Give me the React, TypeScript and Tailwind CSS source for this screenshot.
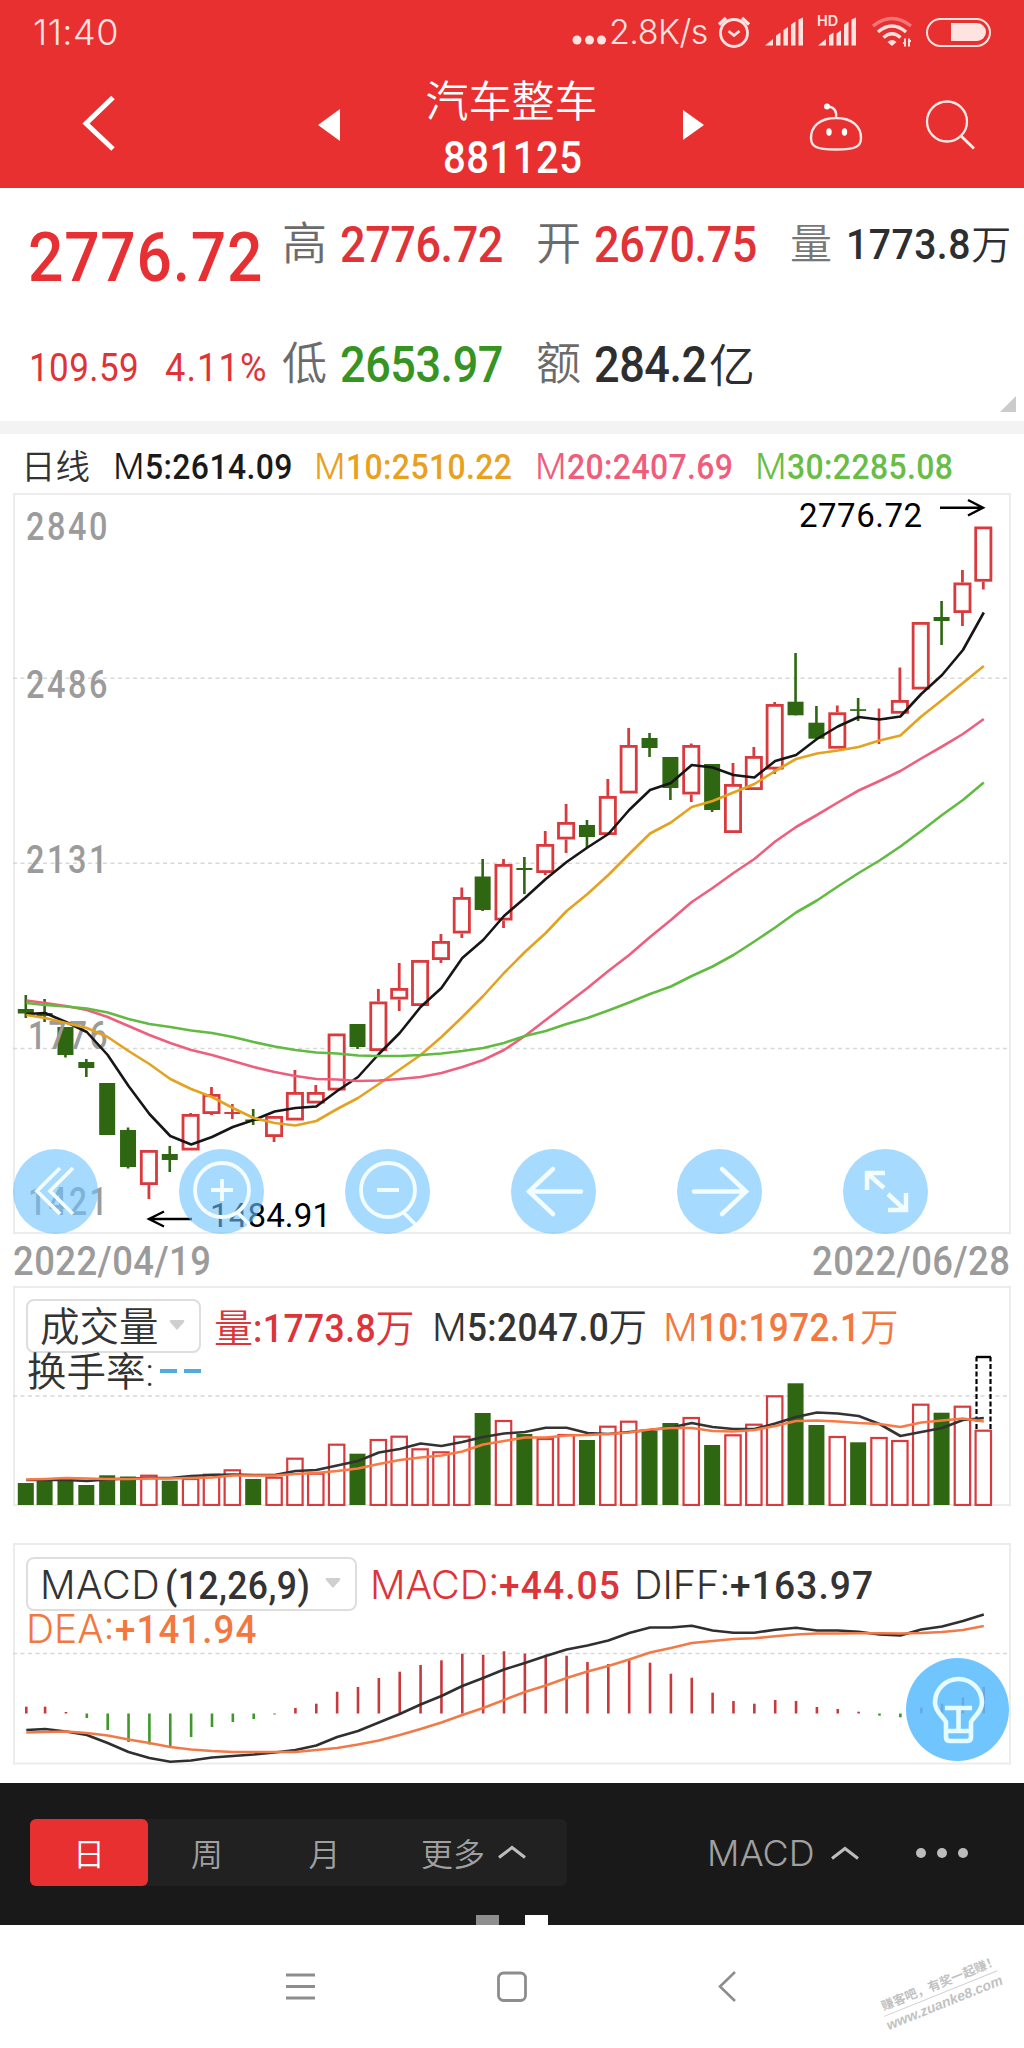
import type { ReactNode } from 'react'

type Candle = [hi: number, top: number, bottom: number, lo: number, up: number]

const RED = '#d93a3e'
const GREEN = '#2f6612'

// x of the n-th trading day, shared by all three charts
const dayX = (i: number) => (i === 0 ? 25.8 : 983.3 - (46 - i) * 20.86)

const candles: Candle[] = [
  [995, 1009, 1013.5, 1018, 0], [999, 1013, 1016, 1022, 0], [1027, 1027, 1055, 1057.5, 0], [1059, 1062, 1068, 1077, 0],
  [1083, 1083, 1135, 1135, 0], [1127.5, 1130, 1167, 1168.5, 0], [1150, 1150, 1185, 1199, 1], [1146, 1154, 1160, 1172, 0],
  [1113, 1114, 1150.5, 1150.5, 1], [1087, 1094, 1114, 1115, 1], [1104, 1112, 1114, 1119, 1], [1109, 1119.5, 1121, 1125, 0],
  [1116, 1116, 1137, 1142, 1], [1070, 1092, 1120.5, 1120.5, 1], [1085, 1092, 1103.5, 1103.5, 1], [1033.5, 1033.5, 1090.5, 1090.5, 1],
  [1024, 1024, 1047, 1049, 0], [989, 1001.5, 1051, 1051, 1], [963, 988, 999.5, 1011, 1], [960, 960, 1006, 1006, 1],
  [934, 941, 960, 963, 1], [887.5, 897, 933.5, 938, 1], [859, 876.5, 910, 911, 0], [859, 864, 920.5, 928, 1],
  [857, 868, 870, 894, 0], [831, 844, 873, 875, 1], [804, 822, 839.5, 853, 1], [820, 825, 837, 848, 0],
  [779, 796, 835, 835, 1], [728, 745, 793.5, 793.5, 1], [733, 738, 748, 757, 0], [757, 757, 788, 800, 0],
  [743.5, 745, 794.5, 802, 1], [764, 764, 810, 812, 0], [763, 784, 833, 833, 1], [747, 756, 790, 790, 1],
  [702, 704, 769.5, 774, 1], [653, 701.7, 715.3, 715.3, 0], [706, 722.7, 738.7, 738.7, 0], [705.5, 712.3, 748.7, 748.7, 1],
  [698, 709.2, 710.9, 721, 0], [708.5, 718.5, 720, 744, 1], [667.5, 700, 713.7, 713.7, 1], [622, 622, 689.5, 689.5, 1],
  [601, 617, 621, 645, 0], [570, 582.5, 613, 626, 1], [526.5, 526.5, 581.7, 589.5, 1],
]

const m5 = [1014, 1013, 1022, 1032, 1055, 1086, 1114, 1136, 1144.5, 1137, 1127, 1120, 1111.5, 1108, 1106.5, 1091, 1077, 1054, 1033, 1007, 988, 958, 940, 916, 898, 879, 862, 847.5, 834, 810, 790, 783, 765, 767.5, 775, 777.5, 761, 755, 739, 726.5, 717, 719.5, 716.5, 694, 675, 650, 612.5]
const m10 = [1015, 1018, 1023, 1028, 1037, 1051, 1064, 1079, 1089, 1097, 1108, 1118, 1123, 1125.5, 1121, 1109, 1098, 1084, 1069.5, 1055, 1037, 1017, 996, 973, 952, 933, 911, 894, 875, 854, 833.5, 822.5, 807, 801, 792.5, 784, 771, 759, 753.5, 750.5, 747, 740.5, 735.5, 716.5, 700, 683, 666]
const m20 = [1000.5, 1003, 1006, 1010, 1017, 1026, 1035, 1043, 1050, 1055, 1061, 1067, 1072, 1076, 1079, 1079.5, 1081, 1080.5, 1079, 1077, 1073, 1067, 1060, 1050, 1036, 1020, 1004, 988, 971, 955, 937, 920, 902, 888, 873, 859, 841.5, 827, 815, 802.5, 790.5, 781, 771, 758.5, 746.5, 734, 719]
const m30 = [1003, 1005, 1006.5, 1008.5, 1012.5, 1019, 1024, 1027, 1030.5, 1033, 1037, 1042, 1046.5, 1050, 1052.5, 1053.5, 1055.5, 1056, 1056, 1055, 1053.5, 1051, 1048, 1043, 1036, 1031, 1024, 1018, 1010.5, 1002.5, 994, 986.5, 976, 966.5, 955, 941.5, 927.5, 912.5, 900.5, 886.5, 873, 860.5, 846.5, 831, 815, 800, 782.5]

const vol = [1483, 1480.5, 1480, 1485, 1475.3, 1476.5, 1474.7, 1480.7, 1478, 1473.7, 1469.3, 1479, 1476.7, 1457.7, 1472.7, 1443.7, 1453.7, 1439, 1435.7, 1448.3, 1451.3, 1435.7, 1413, 1420, 1434, 1438, 1434, 1440, 1425.7, 1420.7, 1431, 1423, 1417, 1445, 1434.3, 1423.7, 1395.3, 1383.3, 1425, 1436, 1442.3, 1437, 1440, 1403.7, 1412.7, 1405.7, 1429.7]
const vol5 = [1480, 1480, 1480, 1481, 1479.5, 1478.5, 1478, 1478, 1476, 1475, 1474.5, 1475, 1475, 1471, 1470, 1465.5, 1461, 1452.5, 1449, 1443.5, 1446, 1442, 1437, 1433.5, 1432, 1427.7, 1427.7, 1433, 1434, 1432, 1430, 1427.5, 1423, 1427, 1429, 1429, 1423.5, 1417, 1412.5, 1413.5, 1416, 1424, 1436, 1432, 1428, 1420, 1418]
const vol10 = [1479.5, 1479, 1478, 1478.5, 1479, 1479, 1478.5, 1478.5, 1478, 1477.5, 1475.5, 1475.5, 1475.5, 1474, 1473, 1471, 1468.5, 1464, 1460, 1457.5, 1455.5, 1451.5, 1444.5, 1441, 1437.5, 1437.5, 1435.5, 1435, 1434, 1432.5, 1429.5, 1428, 1428, 1431, 1431.5, 1430, 1426, 1421, 1420.5, 1421.5, 1423, 1424, 1427, 1422.5, 1420.5, 1418.5, 1421.5]

const macd = [1706.7, 1706.7, 1712, 1718, 1730, 1742, 1744.5, 1746, 1737, 1727, 1722, 1719, 1714.5, 1708, 1703.7, 1691.7, 1687, 1678, 1671.7, 1665, 1660.3, 1653.7, 1654.7, 1651.3, 1653.7, 1654.7, 1655.7, 1662, 1664, 1660, 1662.7, 1673.7, 1677.7, 1692.7, 1701, 1703.7, 1700, 1701, 1707, 1709, 1711.7, 1715.7, 1717.3, 1707.7, 1703.7, 1697.3, 1686.7]
const diff = [1730, 1729, 1731.5, 1735, 1743, 1752, 1758, 1761.7, 1760.5, 1757.5, 1756, 1754.5, 1752.5, 1750, 1745.5, 1737, 1731, 1722.5, 1714, 1704.5, 1696, 1686, 1678, 1669.5, 1663, 1656, 1649.5, 1645.5, 1640.5, 1633, 1627.5, 1627.5, 1625.7, 1630.5, 1632.7, 1632.7, 1629.7, 1627.7, 1630.5, 1630.5, 1631.7, 1634.5, 1635.5, 1629.5, 1626.5, 1621, 1614.5]
const dea = [1732.5, 1732, 1731.5, 1733, 1735.5, 1739.5, 1743, 1747, 1749.5, 1751, 1752, 1752, 1752, 1752, 1750, 1748, 1744.5, 1740.5, 1735, 1729, 1722.5, 1715, 1708, 1700, 1692, 1685.5, 1678, 1671.5, 1666, 1659.5, 1652.5, 1648, 1643, 1641, 1639, 1638.3, 1636.3, 1634.5, 1633.5, 1633.5, 1633.3, 1633.3, 1633.5, 1633, 1632, 1630, 1626]

const Line = ({ data, color }: { data: number[]; color: string }) => (
  <polyline points={data.map((y, i) => `${dayX(i) + 0.5},${y}`).join(' ')} fill="none" stroke={color} strokeWidth="2.6" strokeLinejoin="round" />
)

const Grid = ({ y }: { y: number }) => <path d={`M13 ${y}H1010`} stroke="#d8d8d8" strokeWidth="1.6" strokeDasharray="4 3.5" />

// light letters between the bold numbers
const L = ({ children }: { children: ReactNode }) => (
  <span className="font-['Inter','Noto_Sans_CJK_SC',sans-serif] font-[350]">{children}</span>
)

// narrow number; the negative margin gives back the width that the scale takes away
const N = ({ children }: { children: string }) => (
  <span className="inline-block origin-left scale-x-[0.91] tracking-[0.012em]" style={{ marginRight: `${-children.length * 0.047}em` }}>{children}</span>
)

// same, set a little wider for the MACD figures
const W = ({ children }: { children: string }) => (
  <span className="inline-block origin-left scale-x-[0.94] tracking-[0.03em]" style={{ marginRight: `${-children.length * 0.032}em` }}>{children}</span>
)

const StatusBar = () => (
  <div className="flex h-[64px] items-center text-[#ffe3e0]">
    <p className="ml-[33px] w-[543px] font-['Inter',sans-serif] text-[36px] leading-none font-[350] tracking-[0.5px]">11:40</p>
    <svg className="-ml-[4px] mt-[16px]" width="34" height="10" fill="currentColor">
      <circle cx="5" cy="5" r="4.5" /><circle cx="17.5" cy="5" r="4.5" /><circle cx="29.5" cy="5" r="4.5" />
    </svg>
    <p className="ml-[3px] w-[109px] font-['Inter',sans-serif] text-[34px] leading-none font-[350] tracking-[-0.5px] whitespace-nowrap">2.8K/s</p>
    <svg className="-ml-[1px]" width="34" height="34" fill="none" stroke="currentColor" strokeWidth="2.8">
      <circle cx="17" cy="18" r="13.5" />
      <path d="M2 9.5l7-6.5M32 9.5l-7-6.5" strokeWidth="3.4" />
      <path d="M11.5 16l5.5 4.5 5.5-4.5" />
    </svg>
    <svg className="ml-[14px]" width="40" height="30" fill="currentColor">
      <path d="M0 28.5l8-6.5v6.5zM11 28.5v-10l4.5-3v13zM18.5 28.5v-15.5l4.5-3v18.5zM26 28.5v-21l4.5-3v24zM33.5 28.5V2.5l4.5-2v28z" />
    </svg>
    <div className="relative ml-[13px] h-[30px] w-[40px]">
      <span className="absolute -top-[3px] -left-[1px] font-['Inter',sans-serif] text-[14.5px] leading-none font-semibold">HD</span>
      <svg width="40" height="30" fill="currentColor">
        <path d="M0 28.5l8-6.5v6.5zM11 28.5v-10l4.5-3v13zM18.5 28.5v-12l4.5-3v15zM26 28.5v-21l4.5-3v24zM33.5 28.5V2.5l4.5-2v28z" />
      </svg>
    </div>
    <svg className="ml-[13px]" width="42" height="34" fill="none" stroke="currentColor" strokeWidth="3.4">
      <path d="M2 11Q21-4 40 11" opacity=".4" />
      <path d="M7 17Q21 5 35 17M12.5 22.5Q21 15 29.5 22.5" />
      <path d="M21 31l-4.5-4q4.5-4 9 0z" fill="currentColor" stroke="none" />
      <path d="M34 23.5v8M38 23.5v8M32 28h2M38 26h2" strokeWidth="2" />
    </svg>
    <div className="ml-[13px] flex h-[29px] w-[65px] items-center justify-end rounded-full border-[2.5px] border-[#ffe3e0] pr-[3px]">
      <div className="h-[18px] w-[35px] rounded-r-full bg-[#ffe3e0]"></div>
    </div>
  </div>
)

const TitleBar = () => (
  <div className="flex h-[124px] items-start text-white">
    <svg className="mt-[30px] ml-[82px]" width="36" height="58" fill="none" stroke="currentColor" strokeWidth="5">
      <path d="M31 3.5L4 29.5L31 55" />
    </svg>
    <svg className="mt-[45px] ml-[200px]" width="22" height="32" fill="currentColor"><path d="M0 16L22 0V32z" /></svg>
    <div className="ml-[84px] flex w-[176px] flex-col items-center">
      <h1 className="mt-[12px] ml-[-1px] font-['Noto_Sans_CJK_SC',sans-serif] text-[43px] leading-[44px] font-[350] whitespace-nowrap">汽车整车</h1>
      <p className="mt-[13px] ml-[2px] font-['Roboto',sans-serif] text-[44px] leading-[50px] font-medium"><N>881125</N></p>
    </div>
    <svg className="mt-[46px] ml-[83px]" width="22" height="30" fill="currentColor"><path d="M0 0L21 15L0 30z" /></svg>
    <svg className="mt-[37px] ml-[104px]" width="56" height="52" fill="none" stroke="#ffe9e6" strokeWidth="2.4">
      <path d="M27 17c17 0 25 9 25 20c0 8-4 11.5-25 11.5S2 45 2 37c0-11 8-20 25-20zM27 17c1-7-2-11-8-11.5" />
      <circle cx="18" cy="5.5" r="3" fill="currentColor" stroke="none" />
      <ellipse cx="20" cy="31" rx="2.7" ry="3.7" fill="currentColor" stroke="none" />
      <ellipse cx="35.5" cy="31" rx="2.7" ry="3.7" fill="currentColor" stroke="none" />
    </svg>
    <svg className="mt-[36px] ml-[60px]" width="52" height="52" fill="none" stroke="#ffe9e6" strokeWidth="2.3">
      <circle cx="22" cy="21.5" r="20" /><path d="M36 36l13 12.5" strokeWidth="3" />
    </svg>
  </div>
)

const Cell = ({ label, value, unit, color }: { label: string; value: string; unit?: string; color: string }) => (
  <div className="flex w-[254px] items-center">
    <span className="w-[58px] text-[45px] font-[350] text-[#6b6b6b]">{label}</span>
    <span className={`text-[49.5px] font-medium tracking-[-0.01em] ${color}`}>
      <span className="inline-block origin-left scale-x-[0.91]" style={{ marginRight: `${-value.length * 0.044}em` }}>{value}</span>
      {unit && <span className="ml-[2px] text-[46px] font-[350]">{unit}</span>}
    </span>
  </div>
)

const Quote = () => (
  <section className="relative h-[232px] bg-white pl-[27px] font-['Roboto','Noto_Sans_CJK_SC',sans-serif] leading-[60px] whitespace-nowrap">
    <div className="flex h-[114px] items-center">
      <span className="mt-[26px] w-[255px] pl-px text-[68.5px] font-medium text-[#e73033]"><N>2776.72</N></span>
      <Cell label="高" value="2776.72" color="text-[#df3338]" />
      <Cell label="开" value="2670.75" color="text-[#df3338]" />
      <span className="w-[56px] text-[42px] font-[350] text-[#777]">量</span>
      <span className="text-[43px] font-medium text-[#2d2e30]"><N>1773.8</N><span className="text-[40px] font-[350]">万</span></span>
    </div>
    <div className="mt-[8px] flex h-[110px] items-center">
      <span className="mt-[6px] w-[137px] pl-[2px] text-[38.5px] text-[#df3338]"><N>109.59</N></span>
      <span className="mt-[6px] w-[118px] pl-[1px] text-[38.5px] text-[#df3338]"><W>4.11%</W></span>
      <Cell label="低" value="2653.97" color="text-[#369423]" />
      <Cell label="额" value="284.2" unit="亿" color="text-[#2d2e30]" />
    </div>
    <div className="absolute right-[8px] bottom-[8px] h-[16px] w-[16px] bg-[#cbcbcb] [clip-path:polygon(100%_0,100%_100%,0_100%)]"></div>
  </section>
)

const Averages = () => (
  <div className="flex h-[59px] items-center pt-[8px] pl-[21px] font-['Roboto','Noto_Sans_CJK_SC',sans-serif] text-[35.1px] leading-none font-medium whitespace-nowrap">
    <span className="w-[92px] text-[34.5px] font-[350] text-[#333]">日线</span>
    <span className="w-[201px] text-[#1a1a1a]"><L>M</L><N>5:2614.09</N></span>
    <span className="w-[221px] text-[#e9a01d]"><L>M</L><N>10:2510.22</N></span>
    <span className="w-[220px] text-[#f05d7c]"><L>M</L><N>20:2407.69</N></span>
    <span className="text-[#67bd45]"><L>M</L><N>30:2285.08</N></span>
  </div>
)

const tools = [
  <path d="M47 19L24 42L47 65M60 19L37 42L60 65" />,
  <><circle cx="43" cy="41" r="27" /><path d="M43 30v22M32 41h22M59 64l11 11" /></>,
  <><circle cx="43" cy="41" r="27" /><path d="M32 41h22M59 64l11 11" /></>,
  <path d="M70 42.5H18M42 20L18 42.5L42 65" strokeLinecap="round" strokeWidth="4.5" />,
  <path d="M17 42.5H69M45 20L69 42.5L45 65" strokeLinecap="round" strokeWidth="4.5" />,
  <path d="M41 39L24 24M24 41V24H42M45 45L62 61M45 61H63V44" strokeWidth="4.5" />,
]

const PriceChart = () => (
  <div className="relative mx-[13px] h-[741px]">
    <svg className="block" width="998" height="741" viewBox="13 493 998 741">
      <rect x="14" y="494" width="996" height="739" fill="none" stroke="#ececec" strokeWidth="2" />
      <Grid y={678.2} /><Grid y={863.3} /><Grid y={1048.5} />
      {candles.map(([hi, top, bottom, lo, up], i) => {
        const x = dayX(i)
        const h = bottom - top
        if (up && h > 4) {
          return (
            <g key={i} stroke={RED} strokeWidth="2.8" fill="#fff">
              <path d={`M${x} ${hi}V${top}M${x} ${bottom}V${lo}`} />
              <rect x={x - 7.6} y={top + 1.4} width="15.2" height={h - 2.8} />
            </g>
          )
        }
        return (
          <g key={i} fill={up ? RED : GREEN}>
            <rect x={x - 1.3} y={hi} width="2.6" height={lo - hi} />
            <rect x={x - 8} y={top} width="16" height={h} />
          </g>
        )
      })}
      <g fill="#9b9b9b" fontFamily="Roboto, sans-serif" fontSize="38" fontWeight="500" letterSpacing="3">
        <text x="26" y="540" textLength="84" lengthAdjust="spacingAndGlyphs">2840</text>
        <text x="26" y="697.5" textLength="84" lengthAdjust="spacingAndGlyphs">2486</text>
        <text x="26" y="873" textLength="84" lengthAdjust="spacingAndGlyphs">2131</text>
        <text x="28" y="1048.5" textLength="82" lengthAdjust="spacingAndGlyphs">1776</text>
        <text x="28" y="1215" textLength="82" lengthAdjust="spacingAndGlyphs">1421</text>
      </g>
      <Line data={m5} color="#161616" />
      <Line data={m10} color="#e3a21f" />
      <Line data={m20} color="#ee5f7e" />
      <Line data={m30} color="#62bb41" />
      <g fill="#000" fontFamily="Roboto, sans-serif" fontSize="33">
        <text x="799" y="526.7" textLength="123">2776.72</text>
        <text x="210" y="1226.7" textLength="121">1484.91</text>
      </g>
      <path d="M940 507.7H983M968 500L983 507.7L968 515.5M192 1219H149M164 1211.5L149 1219L164 1226.5" fill="none" stroke="#000" strokeWidth="2.4" />
    </svg>
    <div className="absolute bottom-0 left-0 flex w-[915px] justify-between">
      {tools.map((icon, i) => (
        <button key={i} className="h-[85px] w-[85px] rounded-full bg-[rgba(107,193,255,0.6)]">
          <svg width="85" height="85" fill="none" stroke="#f3fcff" strokeWidth="3.8">{icon}</svg>
        </button>
      ))}
    </div>
  </div>
)

const Select = ({ children, width }: { children: ReactNode; width: string }) => (
  <div className={`flex h-[54px] items-center justify-between rounded-[8px] border-2 border-[#dedede] bg-white pr-[14px] pl-[12px] ${width}`}>
    <span className="pt-[4px] text-[#333]">{children}</span>
    <svg width="16" height="11" className="mb-[1px]"><path d="M2 0H14Q16 0 15 2L9 9Q8 10 7 9L1 2Q0 0 2 0z" fill="#cfcfcf" /></svg>
  </div>
)

const VolumeChart = () => (
  <div className="relative mx-[13px] h-[220px]">
    <svg className="block" width="998" height="220" viewBox="13 1286 998 220">
      <rect x="14" y="1287" width="996" height="218" fill="none" stroke="#ececec" strokeWidth="2" />
      <Grid y={1396} />
      {vol.map((y, i) => candles[i][4] ? (
        <rect key={i} x={dayX(i) - 7.7} y={y + 1} width="15.4" height={1504 - y} fill="#fff" stroke={RED} strokeWidth="2.2" />
      ) : (
        <rect key={i} x={dayX(i) - 8} y={y} width="16" height={1505 - y} fill={GREEN} />
      ))}
      <path d="M976.5 1429V1357M990.5 1429V1357" stroke="#000" strokeWidth="2.2" strokeDasharray="5 2.5" />
      <path d="M976 1357H991" stroke="#000" strokeWidth="2.4" />
      <Line data={vol5} color="#333" />
      <Line data={vol10} color="#f97a44" />
    </svg>
    <div className="absolute top-[13px] left-[13px] font-['Roboto','Noto_Sans_CJK_SC',sans-serif] text-[39px] leading-none font-medium whitespace-nowrap">
      <div className="flex items-center">
        <Select width="w-[175px]"><span className="text-[39.5px] font-[350]">成交量</span></Select>
        <span className="ml-[13px] w-[218px] pt-[4px] text-[#dc3439]"><L>量</L><N>:1773.8</N><L>万</L></span>
        <span className="w-[231px] pt-[4px] text-[38.6px] text-[#333]"><L>M</L><N>5:2047.0</N><L>万</L></span>
        <span className="pt-[4px] text-[38.6px] text-[#f37840]"><L>M</L><N>10:1972.1</N><L>万</L></span>
      </div>
      <p className="mt-0 ml-[1px] flex text-[39.5px] font-[350] text-[#333]">
        换手率:<span className="mt-[16px] ml-[6px] h-[4px] w-[17px] bg-[#54aadc]"></span><span className="mt-[16px] ml-[7px] h-[4px] w-[17px] bg-[#54aadc]"></span>
      </p>
    </div>
  </div>
)

const MacdChart = () => (
  <div className="relative mx-[13px] mt-[37px] h-[222px]">
    <svg className="block" width="998" height="222" viewBox="13 1543 998 222">
      <rect x="14" y="1544" width="996" height="219.5" fill="none" stroke="#ececec" strokeWidth="2" />
      <Grid y={1653.5} />
      {macd.map((y, i) => (
        <path key={i} d={`M${dayX(i) + 0.5} 1713.5V${y}`} stroke={y > 1713.5 ? '#3d9a2a' : '#c7393c'} strokeWidth="2.6" />
      ))}
      <Line data={diff} color="#2f2f2f" />
      <Line data={dea} color="#f27a48" />
    </svg>
    <div className="absolute top-[14px] left-[13px] font-['Roboto',sans-serif] text-[39.5px] leading-none font-medium whitespace-nowrap">
      <div className="flex items-center">
        <Select width="w-[331px]"><span className="tracking-[0.5px]"><L>MACD</L></span><span className="ml-[5px] text-[39px]"><N>(12,26,9)</N></span></Select>
        <span className="ml-[13px] w-[264px] pt-[4px] text-[#dc3439]"><L>MACD:</L><W>+44.05</W></span>
        <span className="pt-[4px] text-[#333]"><L>DIFF:</L><W>+163.97</W></span>
      </div>
      <p className="-mt-[2px] text-[39px] text-[#f37840]"><L>DEA:</L><W>+141.94</W></p>
    </div>
    <button className="absolute right-[2px] bottom-[4px] h-[103px] w-[103px] rounded-full bg-[rgba(90,187,255,0.86)]">
      <svg width="103" height="103" fill="none" stroke="#e6fbff" strokeWidth="4.6">
        <path d="M40 64C37 58 29 54 29 44.5A23.5 23.5 0 0 1 76 44.5C76 54 68 58 65 64V79Q65 83 61 83H44Q40 83 40 79zM40 73H65M39 50H66M52.5 50V73" />
      </svg>
    </button>
  </div>
)

const Up = () => <svg width="30" height="14" fill="none" stroke="#bdbdbd" strokeWidth="3"><path d="M2 12.5L15 2.5L28 12.5" /></svg>

const PeriodBar = () => (
  <div className="relative mt-[18px] flex h-[142px] bg-[#191919] pt-[36px] pl-[30px] font-['Noto_Sans_CJK_SC',sans-serif] text-[32px] leading-none font-[350] text-[#a0a0a0]">
    <div className="flex h-[67px] w-[537px] items-center rounded-[6px] bg-[#212121]">
      <div className="flex h-full w-[118px] items-center justify-center rounded-[6px] bg-[#e83030] pb-[2px] text-white">日</div>
      <div className="w-[118px] pb-[2px] text-center">周</div>
      <div className="w-[117px] pb-[2px] text-center">月</div>
      <div className="ml-[38px] flex items-center gap-[12px] pb-[2px]">更多<Up /></div>
    </div>
    <div className="ml-[140px] flex h-[67px] items-center">
      <span className="w-[123px] pt-[1px] font-['Inter',sans-serif] text-[36px] font-light">MACD</span>
      <Up />
      <svg className="ml-[54px]" width="56" height="12" fill="#bcbcbc"><circle cx="7" cy="6" r="5" /><circle cx="28" cy="6" r="5" /><circle cx="49" cy="6" r="5" /></svg>
    </div>
    <div className="absolute bottom-0 left-[476px] flex gap-[26px]">
      <i className="h-[10px] w-[23px] bg-[#8e8e8e]"></i>
      <i className="h-[10px] w-[23px] bg-white"></i>
    </div>
  </div>
)

const SystemNav = () => (
  <nav className="relative flex h-[123px] items-start overflow-hidden bg-white pt-[46px] pl-[286px]">
    <svg width="30" height="32" stroke="#8d8d8d" strokeWidth="2.8"><path d="M0 4H29M0 15.5H29M0 27H29" /></svg>
    <svg className="ml-[180px]" width="32" height="32" fill="none" stroke="#8d8d8d" strokeWidth="2.8"><rect x="2.5" y="2" width="27" height="27.5" rx="5" /></svg>
    <svg className="ml-[190px]" width="20" height="32" fill="none" stroke="#8d8d8d" strokeWidth="2.6"><path d="M17 1L2 15.5L17 30" /></svg>
    <div className="absolute top-[51px] left-[873px] flex w-[136px] -rotate-[22deg] flex-col items-center font-['Liberation_Sans','Noto_Sans_CJK_SC',sans-serif] whitespace-nowrap text-[#c2c2c2]">
      <p className="ml-[6px] text-[12.5px] leading-[17px] font-bold">赚客吧，有奖一起赚！</p>
      <div className="h-px w-[122px] bg-[#d0d0d0]"></div>
      <p className="text-[14px] leading-[18px] font-bold italic">www.zuanke8.com</p>
    </div>
  </nav>
)

export default function App() {
  return (
    <div className="w-[1024px] bg-white">
      <header className="bg-[#e83030]">
        <StatusBar />
        <TitleBar />
      </header>
      <Quote />
      <div className="mt-[1px] h-[13px] bg-[#f3f3f3]"></div>
      <Averages />
      <PriceChart />
      <div className="flex h-[52px] items-center justify-between px-[13px] pt-[4px] font-['Roboto',sans-serif] text-[40px] leading-none font-medium text-[#9b9b9b]">
        <N>2022/04/19</N>
        <N>2022/06/28</N>
      </div>
      <VolumeChart />
      <MacdChart />
      <PeriodBar />
      <SystemNav />
    </div>
  )
}
